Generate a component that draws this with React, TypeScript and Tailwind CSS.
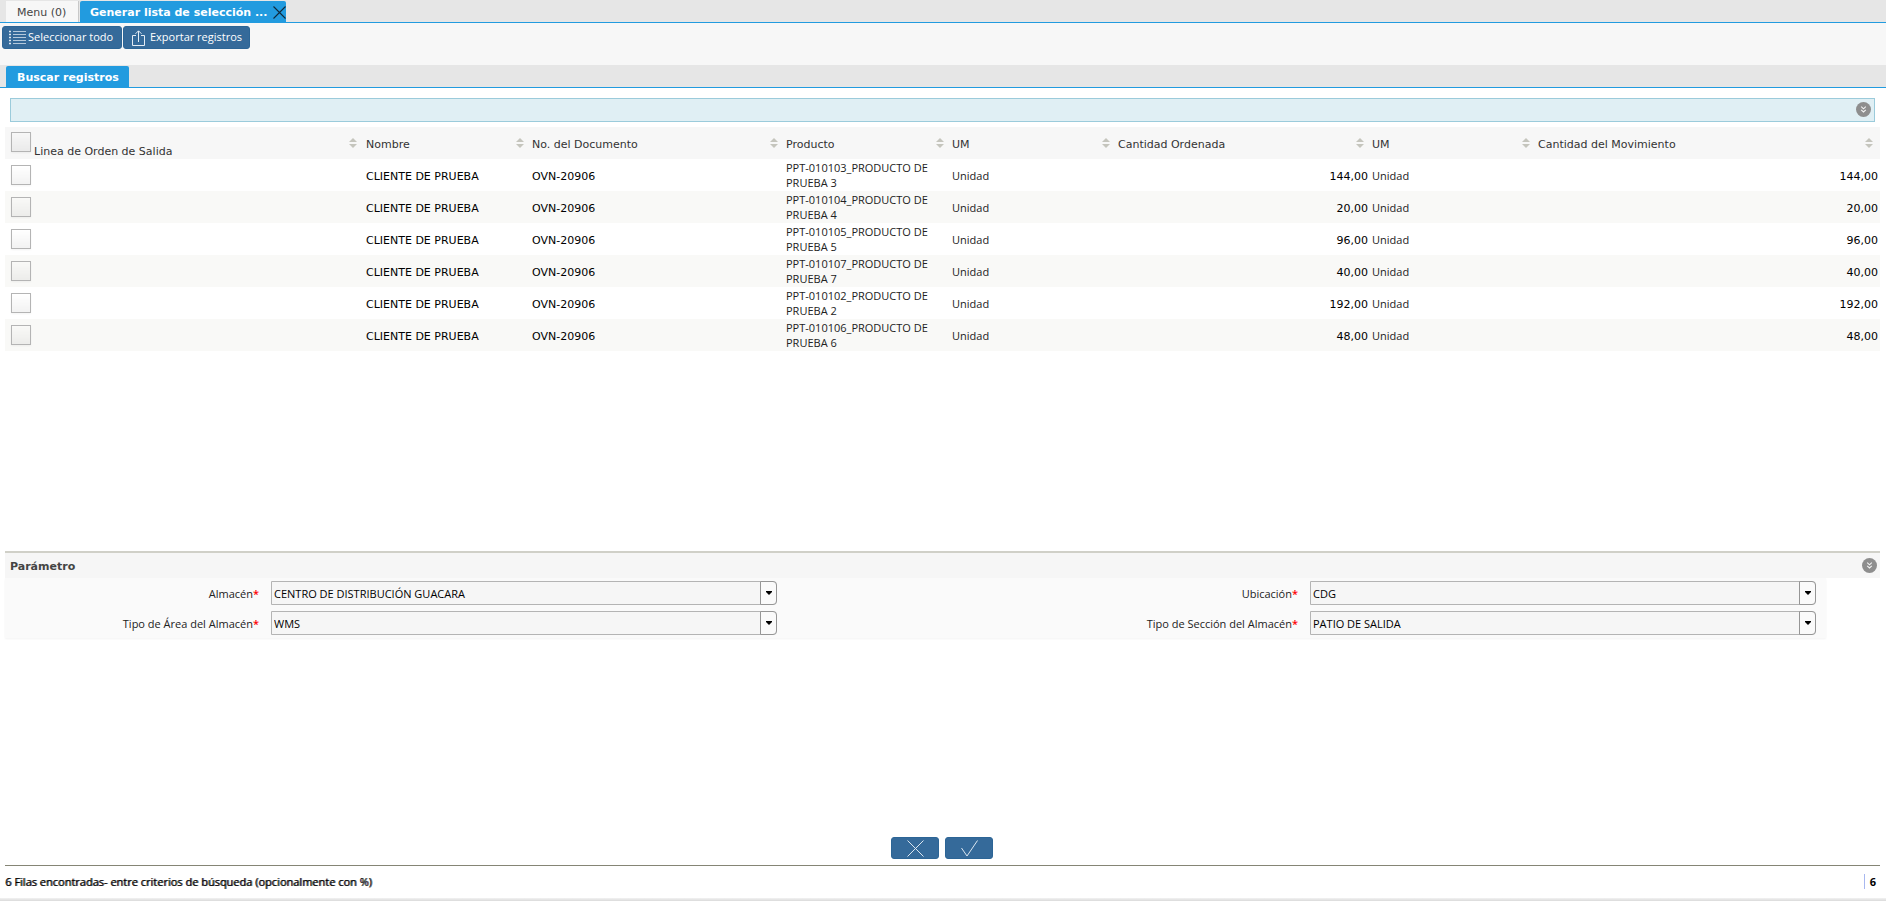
import { useState } from "react";

const columns = [
  { label: "Nombre", width: "w-[166px]" },
  { label: "No. del Documento", width: "w-[254px]" },
  { label: "Producto", width: "w-[166px]" },
  { label: "UM", width: "w-[166px]" },
  { label: "Cantidad Ordenada", width: "w-[254px]" },
  { label: "UM", width: "w-[166px]" },
  { label: "Cantidad del Movimiento", width: "" },
];

const rows = [
  { product: "PPT-010103_PRODUCTO DE PRUEBA 3", qty: "144,00" },
  { product: "PPT-010104_PRODUCTO DE PRUEBA 4", qty: "20,00" },
  { product: "PPT-010105_PRODUCTO DE PRUEBA 5", qty: "96,00" },
  { product: "PPT-010107_PRODUCTO DE PRUEBA 7", qty: "40,00" },
  { product: "PPT-010102_PRODUCTO DE PRUEBA 2", qty: "192,00" },
  { product: "PPT-010106_PRODUCTO DE PRUEBA 6", qty: "48,00" },
];

const checkboxClass =
  "block size-5 shrink-0 appearance-none border border-[#b4b4b4] bg-linear-to-b from-transparent to-black/5 shadow-[0_1px_2px_rgba(0,0,0,0.05)] checked:bg-[#229bdf]";

function SortIcon() {
  return (
    <svg width="8" height="10" viewBox="0 0 8 10" fill="#c5c5bd" className="shrink-0">
      <path d="M4 0 8 4H0zM0 6h8L4 10z" />
    </svg>
  );
}

function CollapseButton({ label }: { label: string }) {
  return (
    <button type="button" aria-label={label} className="size-[15px] shrink-0 rounded-full bg-[#8e8e8e]">
      <svg width="15" height="15" viewBox="0 0 15 15" fill="none" stroke="#f4f4f4" strokeWidth="1.1">
        <path d="M5.2 4.7 7.5 6.8l2.3-2.1M5.2 7.9 7.5 10l2.3-2.1" />
      </svg>
    </button>
  );
}

function Field({ id, label, value }: { id: string; label: string; value: string }) {
  return (
    <>
      <label htmlFor={id} className="pr-3 text-right">
        {label}
        <span className="font-semibold text-[#ff0000]">*</span>
      </label>
      <div className="relative h-6">
        <select
          id={id}
          className="h-6 w-full appearance-none rounded-r border border-[#b4b4b4] bg-[#f6f6f6] pl-[2px] pr-5 text-black"
        >
          <option>{value}</option>
        </select>
        <span className="pointer-events-none absolute inset-y-0 right-0 flex w-[17px] items-center justify-center rounded-r border border-[#969696] bg-[#fafafa]">
          <svg width="6" height="4" viewBox="0 0 6 4">
            <path d="M0 0h6v1L3 4 0 1z" />
          </svg>
        </span>
      </div>
    </>
  );
}

export default function App() {
  const [selected, setSelected] = useState<number[]>([]);

  const toggle = (i: number) =>
    setSelected(selected.includes(i) ? selected.filter((s) => s !== i) : [...selected, i]);
  const selectAll = () => setSelected(rows.map((_, i) => i));

  return (
    <div className="flex min-h-screen flex-col bg-white font-['Open_Sans',sans-serif] text-[11px] leading-[15px] text-[#222]">
      {/* Window tabs */}
      <nav className="flex h-[23px] items-end border-b border-[#229bdf] bg-[#e6e6e6] pl-[6px] font-['DejaVu_Sans',sans-serif]">
        <a href="#" className="flex h-[21px] w-[73px] items-center border-r border-[#c8c8c8] bg-[#f7f7f7] pt-[2px] pl-[11px] text-[#444]">
          Menu (0)
        </a>
        <div className="ml-px flex h-[21px] w-[206px] items-center justify-between rounded-t-xs bg-[#229bdf] pt-[2px] pl-[10px]">
          <a href="#" className="font-bold whitespace-nowrap text-white">Generar lista de selección ...</a>
          <button type="button" aria-label="Cerrar">
            <svg width="13" height="13" viewBox="0 0 13 13" stroke="#10293a" strokeWidth="1.1">
              <path d="M.5.5l12 12M12.5.5l-12 12" />
            </svg>
          </button>
        </div>
      </nav>

      {/* Toolbar */}
      <div className="flex h-[42px] items-start gap-px bg-[#f7f7f7] pt-[3px] pl-[2px] text-white">
        <button
          type="button"
          onClick={selectAll}
          className="flex h-[23px] w-[120px] items-center gap-[2px] rounded-[3px] border border-[#2c6596] bg-[#356a9a] pl-[6px] whitespace-nowrap"
        >
          <svg width="17" height="15" viewBox="0 0 17 15" stroke="#dfe9f2" strokeWidth="1" className="shrink-0">
            <path d="M0 1.5h2M0 4.5h2M0 7.5h2M0 10.5h2M0 13.5h2" strokeWidth="1.5" />
            <path d="M4 1.5h13M4 4.5h13M4 7.5h13M4 10.5h13M4 13.5h13" opacity=".75" />
          </svg>
          <span className="pb-[2px]">Seleccionar todo</span>
        </button>
        <button
          type="button"
          className="flex h-[23px] w-[127px] items-center gap-[5px] rounded-[3px] border border-[#2c6596] bg-[#356a9a] pl-2 whitespace-nowrap"
        >
          <svg width="13" height="16" viewBox="0 0 13 16" fill="none" stroke="#e4ecf4" className="shrink-0">
            <path d="M4 5.5H.5v10h12v-10H9M6.5 12V1M3.5 3.8l3-3 3 3" />
          </svg>
          <span className="pb-[2px]">Exportar registros</span>
        </button>
      </div>

      <nav className="flex h-[23px] items-end border-b border-[#229bdf] bg-[#e6e6e6] pl-[6px] font-['DejaVu_Sans',sans-serif]">
        <a href="#" className="flex h-[21px] w-[123px] items-center rounded-t-xs bg-[#229bdf] pt-[2px] pl-[11px] font-bold whitespace-nowrap text-white">
          Buscar registros
        </a>
      </nav>

      <div className="mt-[10px] mr-[11px] ml-[10px] flex h-6 items-start justify-end border border-[#9bcbdb] bg-[#e0eff4] pt-[3px] pr-[3px]">
        <CollapseButton label="Mostrar criterios" />
      </div>

      {/* Results */}
      <main className="mt-[5px] mr-[6px] ml-[5px] flex-1 font-['DejaVu_Sans',sans-serif]">
        <table className="w-full table-fixed border-collapse">
          <thead className="bg-[#f7f7f7] text-[#333]">
            <tr className="h-8">
              <th className="w-[357px] p-0 font-normal">
                <div className="flex h-8 items-start justify-between pr-[5px] pl-[6px]">
                  <label className="flex gap-[3px] pt-[5px]">
                    <input
                      type="checkbox"
                      className={checkboxClass}
                      checked={selected.length === rows.length}
                      onChange={() => (selected.length === rows.length ? setSelected([]) : selectAll())}
                    />
                    <span className="pt-3">Linea de Orden de Salida</span>
                  </label>
                  <span className="flex h-8 items-center">
                    <SortIcon />
                  </span>
                </div>
              </th>
              {columns.map((column, i) => (
                <th key={i} className={`p-0 font-normal last:pr-[3px] ${column.width}`}>
                  <div className="flex items-center justify-between pr-1 pl-1">
                    <span className="pt-[2px]">{column.label}</span>
                    <SortIcon />
                  </div>
                </th>
              ))}
            </tr>
          </thead>
          <tbody>
            {rows.map((row, i) => (
              <tr key={row.product} className="h-8 even:bg-[#f9f9f7]">
                <td className="p-0 pl-[6px]">
                  <input
                    type="checkbox"
                    aria-label={row.product}
                    className={checkboxClass}
                    checked={selected.includes(i)}
                    onChange={() => toggle(i)}
                  />
                </td>
                <td className="p-0 pt-[2px] pl-1 text-black">CLIENTE DE PRUEBA</td>
                <td className="p-0 pt-[2px] pl-1 text-black">OVN-20906</td>
                <td className="p-0 pl-1 font-['Open_Sans',sans-serif]">{row.product}</td>
                <td className="p-0 pl-1 font-['Open_Sans',sans-serif]">Unidad</td>
                <td className="p-0 pt-[2px] text-right text-black">{row.qty}</td>
                <td className="p-0 pl-1 font-['Open_Sans',sans-serif]">Unidad</td>
                <td className="p-0 pt-[2px] pr-[2px] text-right text-black">{row.qty}</td>
              </tr>
            ))}
          </tbody>
        </table>
      </main>

      {/* Parameters */}
      <section className="mr-[6px] ml-[5px] h-[286px] border-t-2 border-[#d0d0c8]">
        <header className="flex h-[25px] items-center justify-between bg-[#f6f6f6] pr-[3px] pl-[5px]">
          <h2 className="pt-[2px] font-['DejaVu_Sans',sans-serif] font-bold text-[#444]">Parámetro</h2>
          <CollapseButton label="Mostrar parámetros" />
        </header>
        <form className="mr-[54px] grid grid-cols-[266fr_506fr_533fr_506fr] items-center gap-y-[6px] bg-[#fafafa] py-[3px] pr-[10px] shadow-[0_1px_2px_rgba(0,0,0,0.05)]">
          <Field id="almacen" label="Almacén" value="CENTRO DE DISTRIBUCIÓN GUACARA" />
          <Field id="ubicacion" label="Ubicación" value="CDG" />
          <Field id="tipo-area" label="Tipo de Área del Almacén" value="WMS" />
          <Field id="tipo-seccion" label="Tipo de Sección del Almacén" value="PATIO DE SALIDA" />
        </form>
      </section>

      <div className="flex justify-center gap-[6px] pr-[2px] pb-[6px]">
        <button
          type="button"
          aria-label="Cancelar"
          className="flex h-[22px] w-12 items-center justify-center rounded-[3px] border border-[#2c6596] bg-[#356a9a]"
        >
          <svg width="17" height="17" viewBox="0 0 17 17" stroke="#dbe6f0">
            <path d="M.5.5l16 16M16.5.5l-16 16" />
          </svg>
        </button>
        <button
          type="button"
          aria-label="Aceptar"
          className="flex h-[22px] w-12 items-center justify-center rounded-[3px] border border-[#2c6596] bg-[#356a9a]"
        >
          <svg width="17" height="17" viewBox="0 0 17 17" fill="none" stroke="#dbe6f0">
            <path d="M.5 8l5.5 8L16.5.5" />
          </svg>
        </button>
      </div>

      {/* Status bar */}
      <footer className="mr-[6px] ml-[5px] flex h-[33px] items-center justify-between border-t border-[#858575] pb-px text-black">
        <span className="[text-shadow:1px_0_0_rgba(0,0,0,0.7)]">
          6 Filas encontradas- entre criterios de búsqueda (opcionalmente con %)
        </span>
        <span className="border-l border-[#a8b8f0] pr-1 pl-[5px] font-bold">6</span>
      </footer>
      <div className="h-[3px] bg-linear-to-b from-[#f2f2f2] to-[#dadada]" />
    </div>
  );
}
